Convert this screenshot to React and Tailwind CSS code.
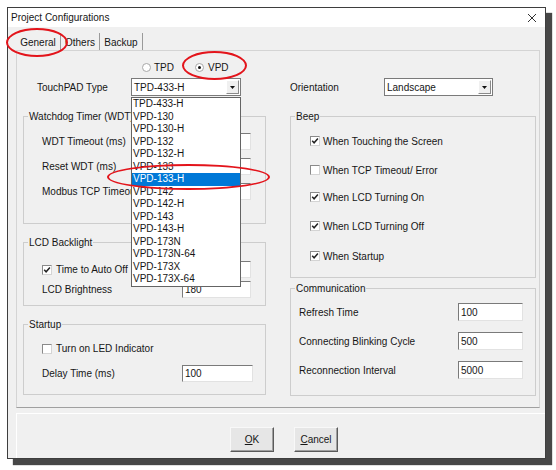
const models = [
  'TPD-433-H', 'VPD-130', 'VPD-130-H', 'VPD-132', 'VPD-132-H', 'VPD-133', 'VPD-133-H',
  'VPD-142', 'VPD-142-H', 'VPD-143', 'VPD-143-H', 'VPD-173N', 'VPD-173N-64', 'VPD-173X', 'VPD-173X-64',
];

const Check = ({ checked }) => (
  <span className="w-[10px] h-[10px] shrink-0 bg-white border border-[#8a8a8a] border-r-[#d4d4d4] border-b-[#d4d4d4] flex items-center justify-center">
    {checked && (
      <svg width="8" height="8" viewBox="0 0 8 8"><path d="M1.2 3.8 L3.1 5.8 L6.9 1.6" fill="none" stroke="#222" strokeWidth="1.5" /></svg>
    )}
  </span>
);

const Radio = ({ on }) => (
  <span className="w-[9px] h-[9px] rounded-full bg-white border border-[#a8a8a8] flex items-center justify-center">
    {on && <span className="w-[3px] h-[3px] rounded-full bg-[#111]" />}
  </span>
);

const Field = ({ value, w = 'w-[69px]', h = 'h-[17px]' }) => (
  <div className={`${w} ${h} bg-white border border-t-[#7a7a7a] border-l-[#7a7a7a] border-r-[#e2e2e2] border-b-[#e2e2e2] pl-[2px] flex items-center`}>
    {value}
  </div>
);

const Arrow = () => (
  <span className="ml-auto mr-[1px] w-[13px] h-[14px] bg-[#f0f0f0] border border-t-white border-l-white border-r-[#8a8a8a] border-b-[#8a8a8a] flex items-center justify-center">
    <svg width="5" height="3" viewBox="0 0 5 3"><path d="M0 0 H5 L2.5 3 Z" fill="#111" /></svg>
  </span>
);

const Group = ({ title, h, className = '', children }) => (
  <fieldset className={`${h} ${className} border border-[#cdcdcd]`}>
    <legend className="ml-[4px] px-[1px] leading-[13px] whitespace-nowrap">{title}</legend>
    {children}
  </fieldset>
);

const Btn = ({ u, rest }) => (
  <button className="w-[44px] h-[25px] bg-[#e6e6e6] border border-t-[#f8f8f8] border-l-[#f8f8f8] border-r-[#5a5a5a] border-b-[#5a5a5a] shadow-[inset_-1px_-1px_0_#a0a0a0] text-[10px] text-[#161616]">
    <span className="underline">{u}</span>{rest}
  </button>
);

export default function App() {
  return (
    <div className="relative w-[556px] h-[470px] bg-white overflow-hidden font-['Liberation_Sans',Arial,sans-serif] text-[10px] text-[#161616]">
      <div className="ml-[7px] mt-[7px] w-[539px] h-[452px] border border-[#3e3e3e] bg-[#f0f0f0] flex flex-col shadow-[6px_6px_1px_rgba(0,0,0,0.72)]">
        {/* title bar */}
        <div className="h-[19px] bg-white flex items-center pl-[3px] pr-[8px]">
          <span>Project Configurations</span>
          <svg className="ml-auto" width="10" height="10" viewBox="0 0 10 10"><path d="M1 1 L9 9 M9 1 L1 9" stroke="#333" strokeWidth="1" /></svg>
        </div>

        <div className="flex-1 flex flex-col pl-[8px]">
          {/* tabs */}
          <div className="mt-[6px] h-[17px] flex">
            <div className="w-[45px] flex items-center justify-center pt-[2px] border-r border-[#9a9a9a]">General</div>
            <div className="w-[39px] flex items-center justify-center pt-[2px] border-r border-[#9a9a9a]">Others</div>
            <div className="w-[43px] flex items-center justify-center pt-[2px] border-r border-[#9a9a9a]">Backup</div>
          </div>

          {/* tab panel */}
          <div className="w-[524px] h-[358px] border border-[#d4d4d4] border-b-[#a0a0a0] flex flex-col">
            <div className="mt-[8px] h-[16px] flex items-center pl-[125px]">
              <Radio />
              <span className="ml-[3px]">TPD</span>
              <span className="ml-[21px]"><Radio on /></span>
              <span className="ml-[4px]">VPD</span>
            </div>

            <div className="mt-[3px] h-[18px] flex items-center pl-[20px]">
              <span className="w-[94px]">TouchPAD Type</span>
              <div className="relative w-[110px] h-[18px] bg-white border border-[#7a7a7a] flex items-center">
                <span className="pl-[2px]">TPD-433-H</span>
                <Arrow />
                <div className="absolute left-[-1px] top-[18px] w-[110px] h-[190px] bg-white border border-[#646464] z-10 flex flex-col">
                  {models.map((m) => (
                    <div key={m} className={`h-[12.5px] leading-[12.5px] pl-[1px] ${m === 'VPD-133-H' ? 'bg-[#0078d7] text-white' : ''}`}>{m}</div>
                  ))}
                </div>
              </div>
              <span className="ml-[49px] w-[94px]">Orientation</span>
              <div className="w-[109px] h-[18px] bg-white border border-[#7a7a7a] flex items-center">
                <span className="pl-[2px]">Landscape</span>
                <Arrow />
              </div>
            </div>

            <div className="mt-[14px] flex pl-[6px] gap-[24px]">
              {/* left column */}
              <div className="w-[243px] flex flex-col">
                <Group title="Watchdog Timer (WDT)" h="h-[114px]">
                  <div className="pt-[10px] pl-[18px] flex flex-col gap-[8px]">
                    <div className="h-[17px] flex items-center"><span className="w-[140px]">WDT Timeout (ms)</span><Field value="" /></div>
                    <div className="h-[17px] flex items-center"><span className="w-[140px]">Reset WDT (ms)</span><Field value="" /></div>
                    <div className="h-[17px] flex items-center"><span className="w-[140px]">Modbus TCP Timeout (ms)</span><Field value="" /></div>
                  </div>
                </Group>
                <Group title="LCD Backlight" h="h-[70px]" className="mt-[12px]">
                  <div className="pt-[12px] pl-[18px] flex flex-col gap-[3px]">
                    <div className="h-[17px] flex items-center">
                      <span className="w-[140px] flex items-center gap-[4px]"><Check checked />Time to Auto Off</span>
                      <Field value="" />
                    </div>
                    <div className="h-[17px] flex items-center"><span className="w-[140px]">LCD Brightness</span><Field value="180" /></div>
                  </div>
                </Group>
                <Group title="Startup" h="h-[77px]" className="mt-[12px]">
                  <div className="pt-[9px] pl-[18px] flex flex-col gap-[8px]">
                    <div className="h-[17px] flex items-center gap-[4px]"><Check />Turn on LED Indicator</div>
                    <div className="h-[17px] flex items-center"><span className="w-[140px]">Delay Time (ms)</span><Field value="100" w="w-[71px]" /></div>
                  </div>
                </Group>
              </div>

              {/* right column */}
              <div className="w-[246px] flex flex-col">
                <Group title="Beep" h="h-[168px]">
                  <div className="pt-[11px] pl-[19px] flex flex-col">
                    <div className="h-[14px] flex items-center gap-[3px]"><Check checked />When Touching the Screen</div>
                    <div className="mt-[15px] h-[14px] flex items-center gap-[3px]"><Check />When TCP Timeout/ Error</div>
                    <div className="mt-[13px] h-[14px] flex items-center gap-[3px]"><Check checked />When LCD Turning On</div>
                    <div className="mt-[15px] h-[14px] flex items-center gap-[3px]"><Check checked />When LCD Turning Off</div>
                    <div className="mt-[16px] h-[14px] flex items-center gap-[3px]"><Check checked />When Startup</div>
                  </div>
                </Group>
                <Group title="Communication" h="h-[114px]" className="mt-[4px]">
                  <div className="pt-[8px] pl-[8px] flex flex-col gap-[11px]">
                    <div className="h-[18px] flex items-center"><span className="w-[159px]">Refresh Time</span><Field value="100" w="w-[65px]" h="h-[18px]" /></div>
                    <div className="h-[18px] flex items-center"><span className="w-[159px]">Connecting Blinking Cycle</span><Field value="500" w="w-[65px]" h="h-[18px]" /></div>
                    <div className="h-[18px] flex items-center"><span className="w-[159px]">Reconnection Interval</span><Field value="5000" w="w-[65px]" h="h-[18px]" /></div>
                  </div>
                </Group>
              </div>
            </div>
          </div>

          {/* button area */}
          <div className="mt-[5px] flex-1 border-t border-l border-white flex items-start pt-[13px] pl-[213px] gap-[20px]">
            <Btn u="O" rest="K" />
            <Btn u="C" rest="ancel" />
          </div>
        </div>
      </div>

      {/* red highlight ellipses */}
      <div className="absolute left-[6px] top-[28px] w-[62px] h-[29px] rounded-[50%] border-[2.5px] border-[#e3141b] z-20 pointer-events-none" />
      <div className="absolute left-[182px] top-[51px] w-[65px] h-[29px] rounded-[50%] border-[2.5px] border-[#e3141b] z-20 pointer-events-none" />
      <div className="absolute left-[107px] top-[164px] w-[163px] h-[26px] rounded-[50%] border-[2.5px] border-[#e3141b] z-20 pointer-events-none" />
    </div>
  );
}
